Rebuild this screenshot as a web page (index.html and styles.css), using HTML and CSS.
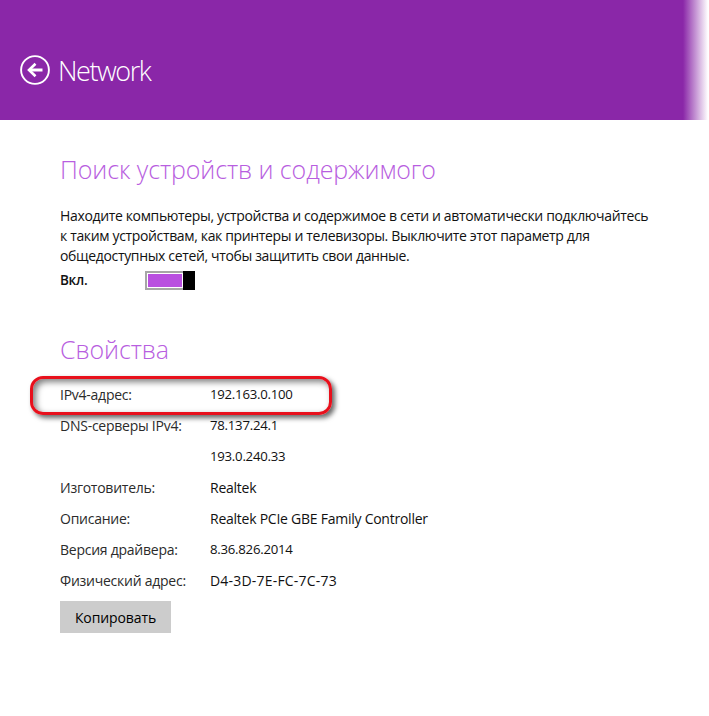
FILE: index.html
```html
<!DOCTYPE html>
<html lang="ru">
<head>
  <meta charset="UTF-8" />
  <title>Network</title>
  <link rel="stylesheet" href="styles.css">
</head>
<body>
  <!-- HEADER -->
  <header class="top-bar">
    <svg class="back-icon" width="30" height="30" viewBox="0 0 30 30" fill="none" stroke="#fff">
      <circle cx="15" cy="15" r="13.9" stroke-width="1.9" />
      <path d="M22.5 15H10" stroke-width="3" />
      <path d="M15.5 8.8L9 15l6.5 6.2" stroke-width="2.6" />
    </svg>
    <h1>Network</h1>
  </header>

  <main class="content">
    <!-- DISCOVERY -->
    <section class="discovery">
      <h2>Поиск устройств и содержимого</h2>
      <p>Находите компьютеры, устройства и содержимое в сети и автоматически подключайтесь к таким устройствам, как принтеры и телевизоры. Выключите этот параметр для общедоступных сетей, чтобы защитить свои данные.</p>
      <div class="toggle-row">
        <span class="toggle-label">Вкл.</span>
        <span class="toggle"><span class="toggle-fill"></span><span class="toggle-thumb"></span></span>
      </div>
    </section>

    <!-- PROPERTIES -->
    <section class="props">
      <h2>Свойства</h2>
      <dl class="prop-list">
        <div class="prop-row highlighted"><dt>IPv4-адрес:</dt><dd class="num">192.163.0.100</dd></div>
        <div class="prop-row"><dt>DNS-серверы IPv4:</dt><dd class="num">78.137.24.1</dd></div>
        <div class="prop-row"><dt></dt><dd class="num">193.0.240.33</dd></div>
        <div class="prop-row"><dt>Изготовитель:</dt><dd>Realtek</dd></div>
        <div class="prop-row"><dt>Описание:</dt><dd>Realtek PCIe GBE Family Controller</dd></div>
        <div class="prop-row"><dt>Версия драйвера:</dt><dd class="num">8.36.826.2014</dd></div>
        <div class="prop-row"><dt>Физический адрес:</dt><dd class="mac">D4-3D-7E-FC-7C-73</dd></div>
      </dl>
      <button type="button" class="btn-copy">Копировать</button>
    </section>
  </main>
</body>
</html>
```

FILE: styles.css
```css
/* GLOBAL */
body { margin:0; background:#fff; color:#111; font-family:'Open Sans', 'Noto Sans', sans-serif; font-size:14px; }

/* HEADER */
.top-bar { height:120px; display:flex; align-items:center; gap:8px; padding:20px 0 0 20px; box-sizing:border-box;
  background:linear-gradient(to right, #8a27a8 683px, #fff 708px); }
.back-icon { flex:none; }
.top-bar h1 { margin:0; font-size:27px; font-weight:300; color:#fff; letter-spacing:-1.4px; }

/* CONTENT */
.content { padding:0 0 0 60px; }
h2 { margin:0; font-weight:300; font-size:25px; line-height:34px; color:#b85ee0; letter-spacing:-0.1px; }
.discovery { padding-top:32px; }
.discovery p { margin:20px 0 0; width:592px; line-height:20px; letter-spacing:-0.35px; }

/* TOGGLE */
.toggle-row { display:flex; align-items:center; height:20px; margin-top:4px; }
.toggle-label { width:85px; font-weight:600; font-size:13.5px; letter-spacing:-0.3px; }
.toggle { display:flex; width:50px; height:19px; }
.toggle-fill { flex:1; border:2px solid #a6a6a6; border-right:none; background:#b94fe0; box-shadow:inset 0 0 0 1px #fff; }
.toggle-thumb { width:12px; background:#000; }

/* PROPERTIES */
.props { padding-top:42px; }
.prop-list { margin:12.5px 0 0; }
.prop-row { display:flex; align-items:center; height:31px; letter-spacing:-0.25px; }
.prop-row dt { width:150px; color:#2b2b2b; }
.prop-row dd { margin:0; }
.prop-row .num { font-size:13.2px; }
.prop-row .mac { letter-spacing:0.2px; }
.highlighted { position:relative; }
.highlighted::before { content:''; position:absolute; left:-30px; top:-3px; width:296px; height:33px; border:3px solid #e8101c; border-radius:13px;
  box-shadow:3px 3px 5px rgba(0,0,0,0.6), inset 3px 3px 6px rgba(0,0,0,0.5); }

/* BUTTON */
.btn-copy { display:block; margin-top:5.5px; width:111px; height:32px; padding:0; border:none; background:#cccccc; color:#000; font:500 14px 'Open Sans', sans-serif; letter-spacing:-0.1px; }
```
